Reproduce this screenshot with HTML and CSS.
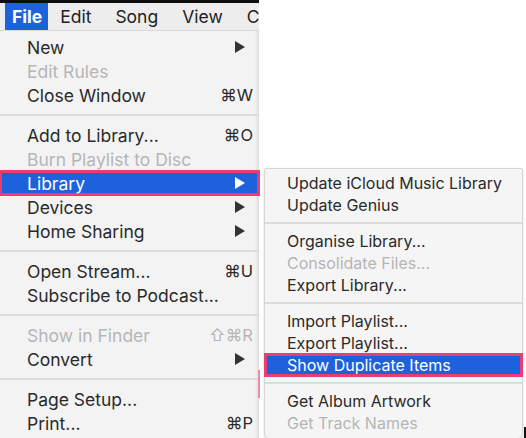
FILE: index.html
```html
<!DOCTYPE html>
<html>
<head>
<meta charset="utf-8">
<link rel="stylesheet" href="styles.css">
</head>
<body>
<div class="screen">
  <div class="left">
    <div class="topline"></div>
    <div class="menubar">
      <span class="mb-item active">File</span>
      <span class="mb-item">Edit</span>
      <span class="mb-item">Song</span>
      <span class="mb-item">View</span>
      <span class="mb-item">C</span>
    </div>
    <div class="menu">
      <div class="row"><span>New</span><svg class="arrow" viewBox="0 0 10 12"><polygon points="0,0 10,6 0,12"/></svg></div>
      <div class="row disabled"><span>Edit Rules</span></div>
      <div class="row"><span>Close Window</span><span class="key">⌘W</span></div>
      <div class="sep"></div>
      <div class="row"><span>Add to Library...</span><span class="key">⌘O</span></div>
      <div class="row disabled"><span>Burn Playlist to Disc</span></div>
      <div class="row hl"><span>Library</span><svg class="arrow" viewBox="0 0 10 12"><polygon points="0,0 10,6 0,12"/></svg></div>
      <div class="row"><span>Devices</span><svg class="arrow" viewBox="0 0 10 12"><polygon points="0,0 10,6 0,12"/></svg></div>
      <div class="row"><span>Home Sharing</span><svg class="arrow" viewBox="0 0 10 12"><polygon points="0,0 10,6 0,12"/></svg></div>
      <div class="sep"></div>
      <div class="row"><span>Open Stream...</span><span class="key">⌘U</span></div>
      <div class="row"><span>Subscribe to Podcast...</span></div>
      <div class="sep"></div>
      <div class="row disabled"><span>Show in Finder</span><span class="key">⇧⌘R</span></div>
      <div class="row"><span>Convert</span><svg class="arrow" viewBox="0 0 10 12"><polygon points="0,0 10,6 0,12"/></svg></div>
      <div class="sep"></div>
      <div class="row"><span>Page Setup...</span></div>
      <div class="row"><span>Print...</span><span class="key">⌘P</span></div>
    </div>
  </div>

  <div class="submenu">
    <div class="srow"><span>Update iCloud Music Library</span></div>
    <div class="srow"><span>Update Genius</span></div>
    <div class="ssep"></div>
    <div class="srow"><span>Organise Library...</span></div>
    <div class="srow disabled"><span>Consolidate Files...</span></div>
    <div class="srow"><span>Export Library...</span></div>
    <div class="ssep"></div>
    <div class="srow"><span>Import Playlist...</span></div>
    <div class="srow"><span>Export Playlist...</span></div>
    <div class="srow hl"><span>Show Duplicate Items</span></div>
    <div class="ssep"></div>
    <div class="srow"><span>Get Album Artwork</span></div>
    <div class="srow disabled"><span>Get Track Names</span></div>
  </div>

  <div class="pink-mark"></div>
  <div class="corner-mark"></div>
</div>
</body>
</html>
```
FILE: styles.css
```css
html, body {
  margin: 0;
  padding: 0;
  background: #ffffff;
}

body {
  font-family: Inter, "DejaVu Sans", sans-serif;
  color: #2a2a2a;
}

.screen {
  position: relative;
  width: 526px;
  height: 438px;
  overflow: hidden;
  background: #ffffff;
}

.left {
  width: 259px;
  display: flex;
  flex-direction: column;
}

.topline {
  height: 3px;
  background: #0c0c0c;
}

.menubar {
  height: 27px;
  background: #ededed;
  border-bottom: 1px solid #dadada;
  display: flex;
  align-items: stretch;
  padding-left: 5px;
  font-size: 17.5px;
  color: #222222;
  white-space: nowrap;
  overflow: hidden;
}

.mb-item {
  display: flex;
  align-items: center;
  padding: 0 12px;
}

.mb-item.active {
  background: #1d62dc;
  color: #ffffff;
  font-weight: 700;
  padding: 0 6px 0 7px;
}

.menu {
  background: #f3f3f3;
  padding: 4px 0 8px;
  box-shadow: inset -4px 0 3px -2px #dcdcdc;
}

.row {
  position: relative;
  height: 24px;
  display: flex;
  align-items: center;
  justify-content: space-between;
  padding: 0 6px 0 27px;
  font-size: 17.5px;
  color: #2a2a2a;
  white-space: nowrap;
}

.row.disabled {
  color: #b6b6b6;
}

.row.hl,
.srow.hl {
  background: #1d62dc;
  color: #ffffff;
  box-shadow: inset 0 0 0 2px #ec3c73, 0 0 0 1px #ec3c73;
  z-index: 1;
}

.key {
  font-size: 16.5px;
}

.arrow {
  width: 10px;
  height: 12px;
  margin-right: 8px;
  fill: #333333;
}

.row.hl .arrow {
  fill: #ffffff;
}

.sep {
  height: 16px;
  display: flex;
  align-items: center;
}

.sep::before {
  content: "";
  display: block;
  width: 100%;
  height: 2px;
  background: #dcdcdc;
}

.submenu {
  position: absolute;
  left: 264px;
  top: 168px;
  width: 257px;
  background: #f5f5f5;
  border: 1px solid #d6d6d6;
  border-radius: 2px 2px 5px 5px;
  box-shadow: 0 1px 3px rgba(0, 0, 0, 0.12);
  padding: 3px 0 4px;
}

.srow {
  position: relative;
  height: 22px;
  display: flex;
  align-items: center;
  padding: 0 6px 0 22px;
  font-size: 16px;
  color: #2a2a2a;
  white-space: nowrap;
}

.srow.disabled {
  color: #b6b6b6;
}

.ssep {
  height: 14px;
  display: flex;
  align-items: center;
}

.ssep::before {
  content: "";
  display: block;
  width: 100%;
  height: 2px;
  background: #dcdcdc;
}

.pink-mark {
  position: absolute;
  left: 258px;
  top: 370px;
  width: 2px;
  height: 28px;
  background: #f08aa8;
}

.corner-mark {
  position: absolute;
  left: 524px;
  top: 427px;
  width: 2px;
  height: 11px;
  background: #111111;
}
```
